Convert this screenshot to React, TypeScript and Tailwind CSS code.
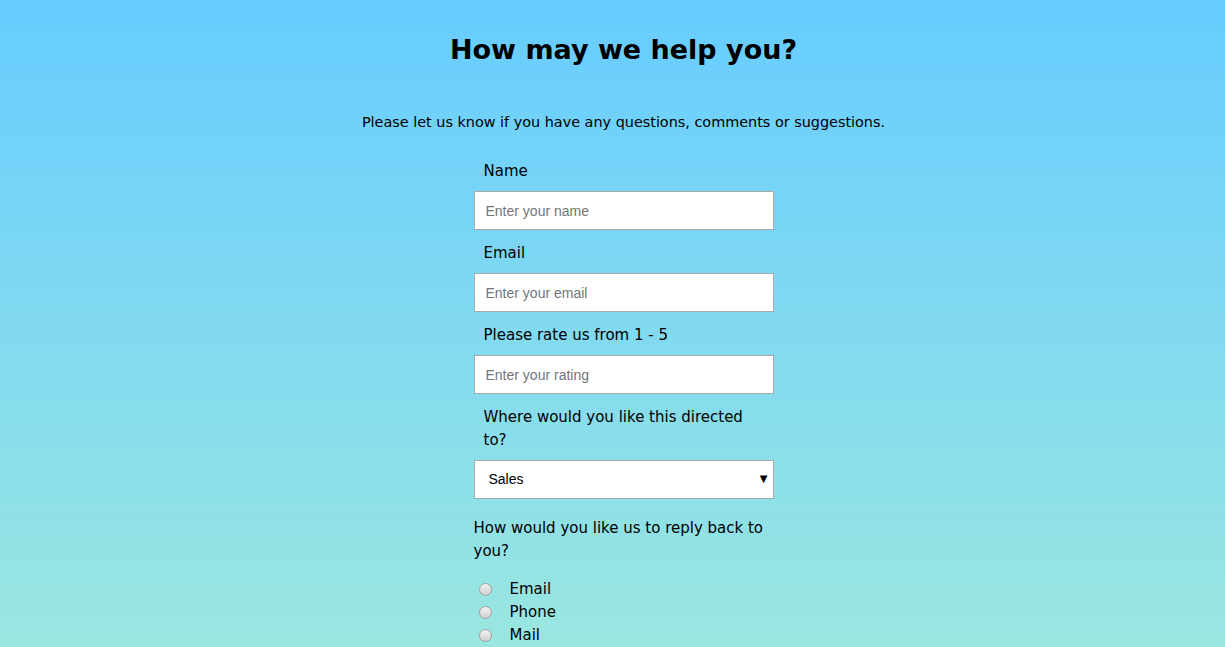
import React from "react";

const font = { fontFamily: '"Comic Sans MS", "DejaVu Sans", sans-serif' };
const inputFont = { fontFamily: '"Liberation Sans", Arial, sans-serif' };

const fields = [
  { label: "Name", placeholder: "Enter your name" },
  { label: "Email", placeholder: "Enter your email" },
  { label: "Please rate us from 1 - 5", placeholder: "Enter your rating" },
];

export default function App() {
  return (
    <div
      className="h-[647px] overflow-hidden bg-gradient-to-b from-[#66ccff] to-[#9ae6e0] pl-[22px] text-black"
      style={font}
    >
      <h1 className="pt-[29px] text-center text-[27px] font-bold leading-[42px]">
        How may we help you?
      </h1>
      <p className="mt-[40px] text-center text-[14.4px] leading-[23px]">
        Please let us know if you have any questions, comments or suggestions.
      </p>

      <form className="mx-auto mt-[26px] w-[300px]">
        {fields.map((f) => (
          <div key={f.label}>
            <label className="mt-[12px] mb-[8px] block pl-[10px] text-[15px] leading-[23px]">
              {f.label}
            </label>
            <input
              type="text"
              placeholder={f.placeholder}
              className="block h-[39px] w-full border border-[#a9a9a9] bg-white px-[11px] text-[14px] outline-none placeholder:text-[#757575]"
              style={inputFont}
            />
          </div>
        ))}

        <label className="mt-[12px] mb-[8px] block pl-[10px] pr-[20px] text-[15px] leading-[23px]">
          Where would you like this directed to?
        </label>
        <div className="relative">
          <select
            className="block h-[39px] w-full appearance-none border border-[#a9a9a9] bg-white pl-[14px] text-[14px] outline-none"
            style={inputFont}
            defaultValue="sales"
          >
            <option value="sales">Sales</option>
            <option value="support">Support</option>
            <option value="billing">Billing</option>
          </select>
          <span className="pointer-events-none absolute right-[6px] top-[13px] text-[10px] leading-[12px]">
            ▼
          </span>
        </div>

        <p className="mt-[18px] pr-[10px] text-[15px] leading-[23px]">
          How would you like us to reply back to you?
        </p>

        <div className="mt-[15px]">
          {["Email", "Phone", "Mail"].map((r) => (
            <label key={r} className="flex h-[23px] items-center text-[15px]">
              <span className="ml-[5px] h-[13px] w-[13px] rounded-full border border-[#a0a0a0] bg-gradient-to-b from-[#f2f2f2] to-[#d0d0d0]" />
              <span className="ml-[18px]">{r}</span>
            </label>
          ))}
        </div>
      </form>
    </div>
  );
}
